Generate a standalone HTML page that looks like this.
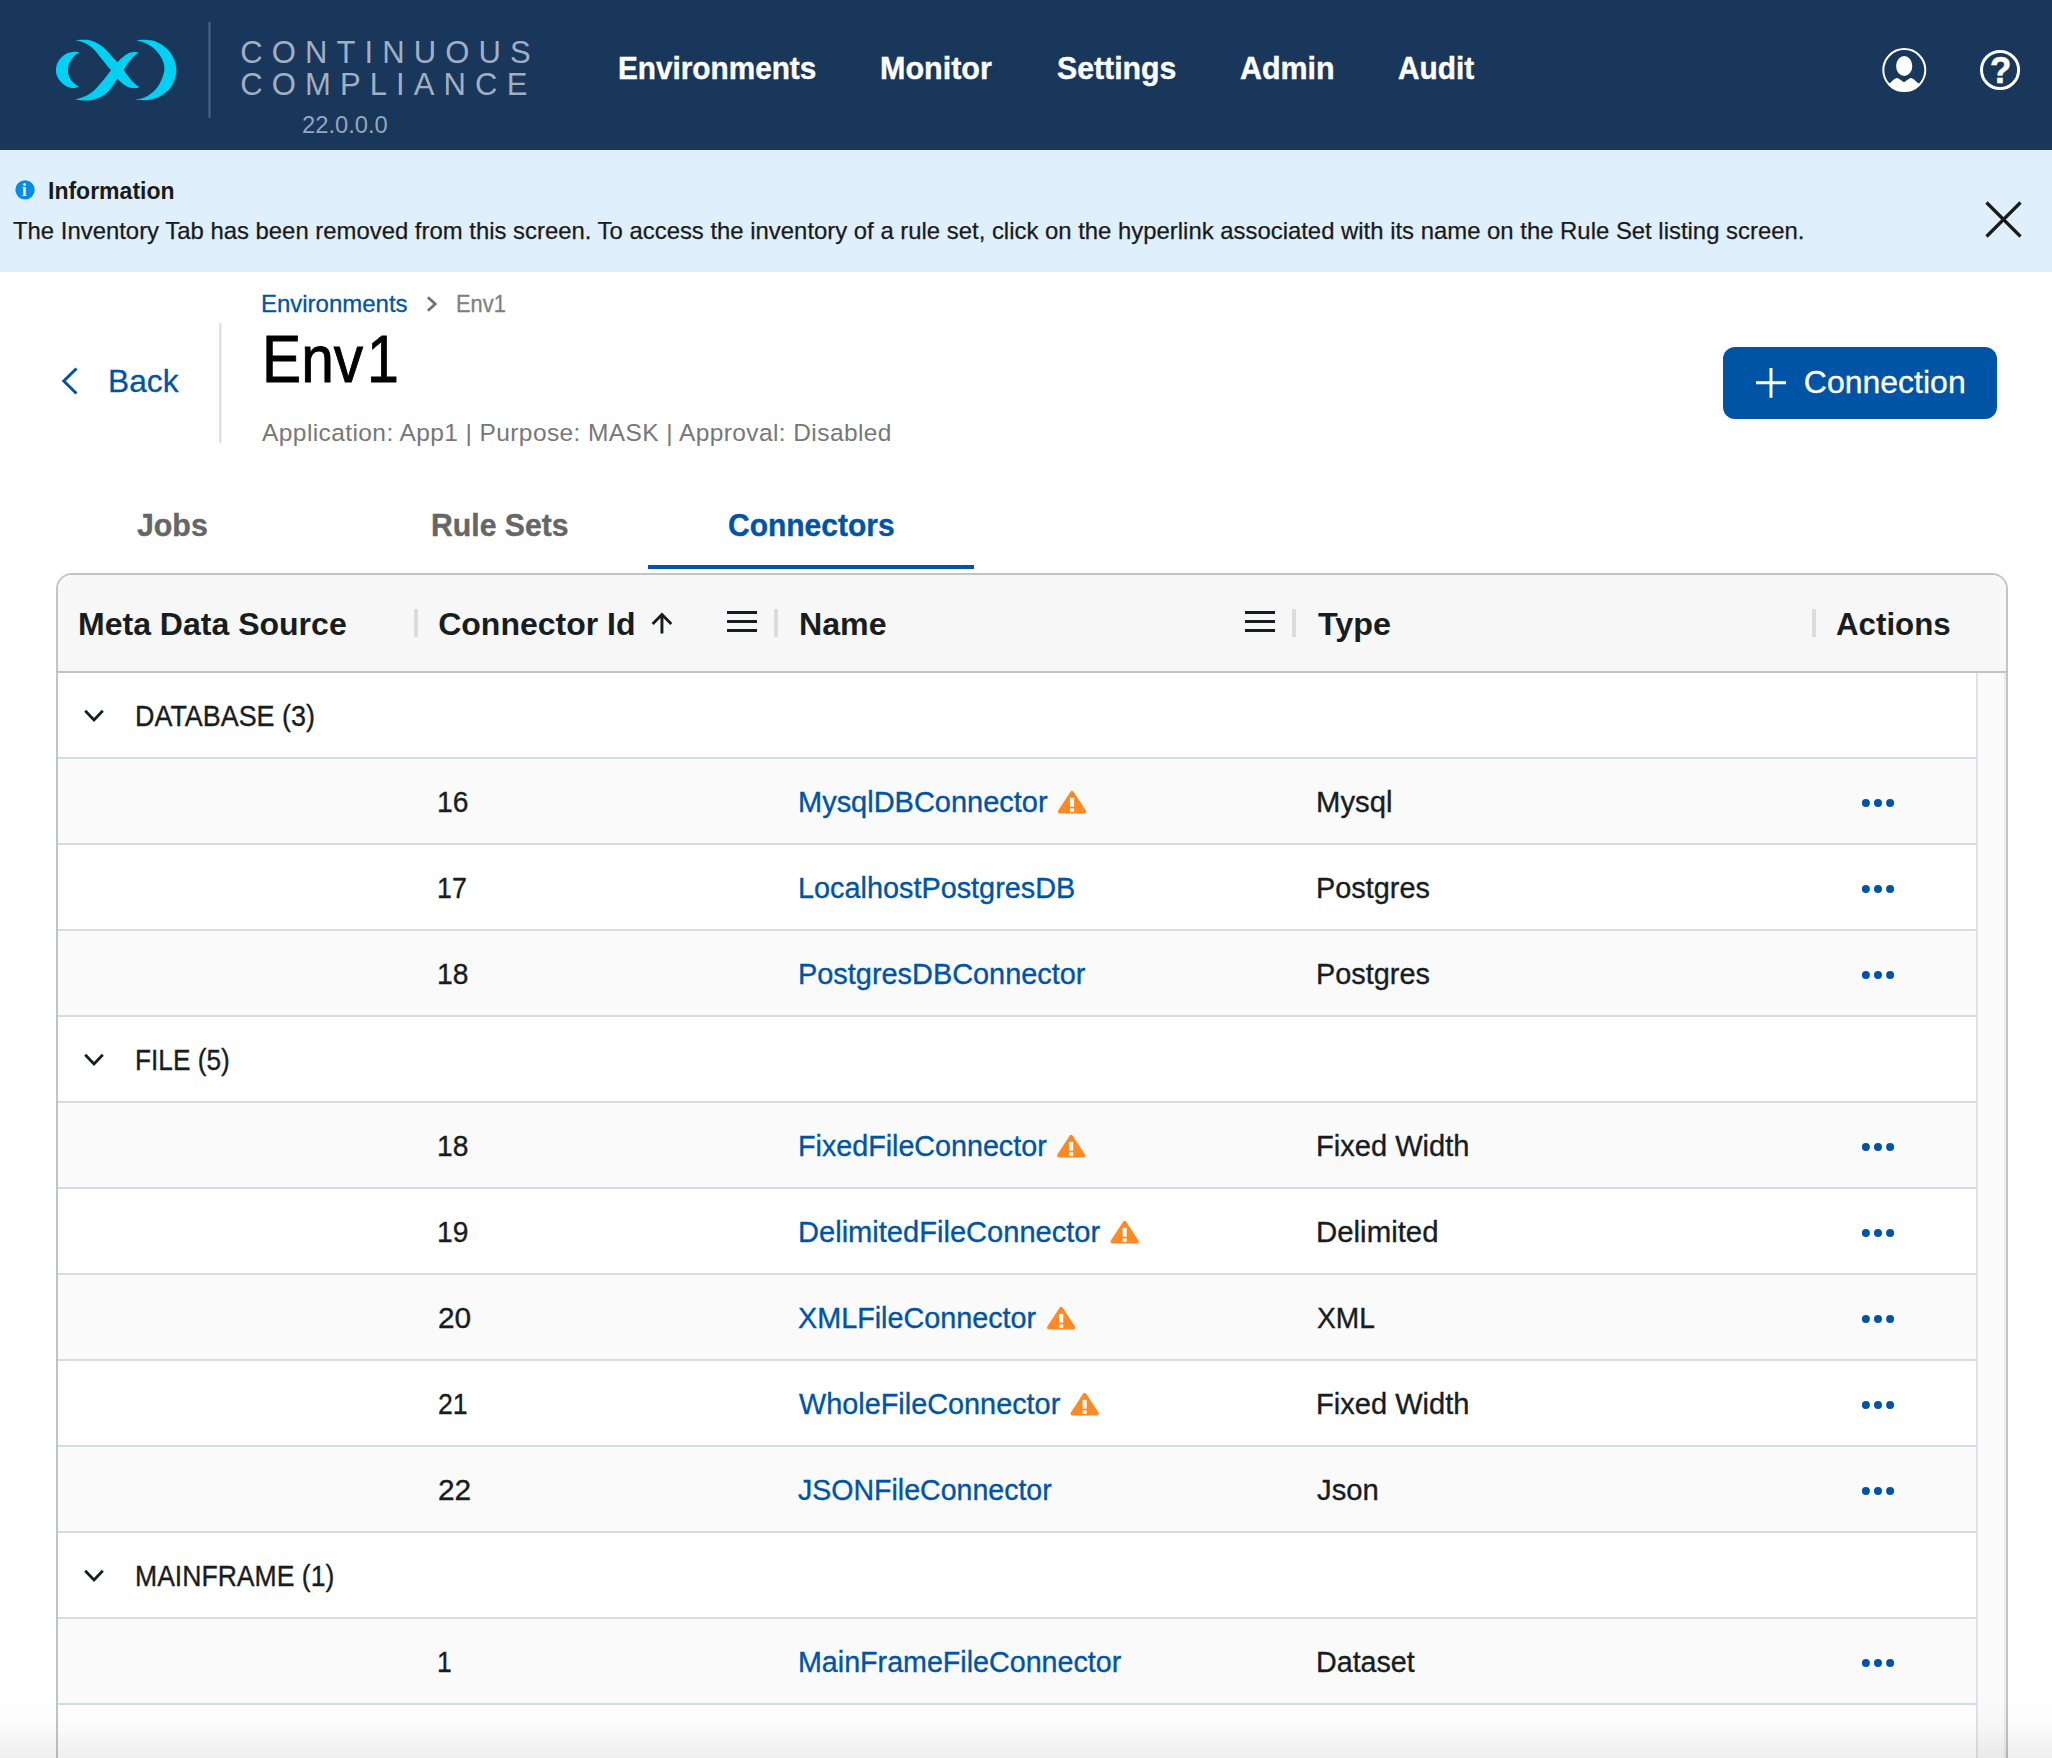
<!DOCTYPE html>
<html lang="en">
<head>
<meta charset="utf-8">
<title>Env1 - Connectors</title>
<style>
html,body{margin:0;padding:0;}
body{width:2052px;height:1758px;overflow:hidden;background:#fff;font-family:"Liberation Sans",sans-serif;position:relative;}
#root{position:absolute;left:0;top:0;width:2052px;height:1758px;overflow:hidden;}
.abs{position:absolute;}
.t{position:absolute;white-space:nowrap;transform-origin:0 50%;z-index:6;}
#hdr{left:0;top:0;width:2052px;height:150px;background:#18375b;}
#info{left:0;top:150px;width:2052px;height:122px;background:#dff0fc;}
#grid{left:56px;top:573px;width:1948px;height:1300px;border:2px solid #c2c4c3;border-radius:16px;background:#fff;overflow:hidden;}
#ghead{left:0;top:0;width:1948px;height:96px;background:#f7f7f7;border-bottom:2px solid #c2c4c3;}
.row{position:absolute;left:0;width:1918px;height:84px;border-bottom:2px solid #d6dce5;background:#fff;}
.row.odd{background:#fafafb;}
#sbar{left:1918px;top:98px;width:26px;height:1200px;background:#fafafa;border-left:2px solid #e2e2e2;border-right:2px solid #ececec;}
.sep{position:absolute;top:34px;width:4px;height:28px;background:#dcdcdc;}
#fade{left:0;top:1700px;width:2052px;height:58px;background:linear-gradient(to bottom,rgba(0,0,0,0),rgba(0,0,0,0.02) 50%,rgba(0,0,0,0.065));}
</style>
</head>
<body>
<div id="root">
<div class="abs" id="hdr"></div>
<div class="abs" id="info"></div>
<svg class="abs" style="left:0;top:0;z-index:5;pointer-events:none" width="2052" height="1758" viewBox="0 0 2052 1758">
<g fill="#00d0f2">
<path d="M75.0 40.5 C76.2 40.3 79.4 39.8 81.7 39.8 C84.0 39.7 86.5 39.6 88.8 40.0 C91.2 40.5 93.5 41.2 95.9 42.4 C98.2 43.5 100.8 45.3 102.9 47.0 C105.1 48.7 106.9 50.8 108.6 52.6 C110.2 54.4 111.4 56.0 112.8 57.6 C114.3 59.1 116.1 60.7 117.4 62.2 C118.7 63.6 119.5 64.7 120.6 66.0 C121.7 67.3 122.5 68.2 123.8 69.9 C125.1 71.7 126.9 74.7 128.4 76.6 C129.9 78.6 131.2 80.1 132.6 81.6 C134.0 83.1 135.7 84.6 136.9 85.5 C138.0 86.4 139.2 86.6 139.7 86.9 C139.0 87.1 137.1 88.0 135.4 88.1 C133.8 88.2 131.4 88.0 129.8 87.6 C128.1 87.2 127.0 86.6 125.6 85.8 C124.1 85.0 122.7 83.8 121.3 82.6 C120.0 81.5 118.6 80.1 117.4 78.8 C116.3 77.4 115.3 75.9 114.2 74.5 C113.2 73.1 112.5 72.0 111.1 70.3 C109.7 68.5 107.6 66.2 105.8 63.9 C103.9 61.7 102.0 59.1 100.1 56.9 C98.2 54.6 96.3 52.1 94.5 50.1 C92.6 48.2 90.9 46.6 88.8 45.2 C86.7 43.8 84.0 42.4 81.7 41.7 C79.4 40.9 76.2 40.7 75.0 40.5 Z"/>
<path d="M139.3 52.5 C138.3 52.4 135.2 51.9 133.3 52.0 C131.5 52.2 129.9 52.6 128.4 53.3 C126.9 54.0 125.6 55.1 124.1 56.1 C122.7 57.2 121.0 58.7 119.9 59.7 C118.8 60.7 118.4 61.1 117.4 62.2 C116.5 63.2 115.3 64.7 114.2 66.0 C113.2 67.4 112.2 68.7 111.1 70.3 C109.9 71.8 108.8 73.2 107.2 75.2 C105.6 77.2 103.4 80.1 101.5 82.3 C99.6 84.5 97.8 86.8 95.9 88.7 C94.0 90.5 92.3 92.2 90.2 93.6 C88.1 95.0 85.6 96.1 83.2 97.1 C80.7 98.1 76.7 99.2 75.4 99.6 C76.7 99.8 80.4 100.5 83.2 100.5 C85.9 100.6 89.0 100.4 91.6 100.0 C94.2 99.5 96.5 98.8 98.7 97.8 C100.9 96.9 103.2 95.7 105.1 94.3 C106.9 92.9 108.5 91.1 110.0 89.4 C111.5 87.6 113.0 85.5 114.2 83.7 C115.5 81.9 116.4 80.3 117.4 78.8 C118.5 77.2 119.5 75.6 120.6 74.2 C121.7 72.7 123.0 71.2 123.8 69.9 C124.6 68.7 124.7 68.1 125.6 66.7 C126.4 65.4 127.9 63.3 129.1 61.8 C130.3 60.3 131.4 58.8 132.6 57.6 C133.8 56.3 135.0 55.2 136.2 54.4 C137.3 53.5 138.8 52.8 139.3 52.5 Z"/>
<path d="M136.2 40.5 C137.5 40.3 141.2 39.7 143.9 39.8 C146.6 39.8 149.6 39.9 152.4 40.6 C155.2 41.3 158.2 42.5 160.9 44.1 C163.6 45.8 166.5 48.1 168.7 50.5 C170.8 52.8 172.4 55.6 173.6 58.3 C174.8 61.0 175.7 64.2 176.1 66.7 C176.5 69.3 176.5 71.2 176.1 73.8 C175.7 76.4 174.8 79.6 173.6 82.3 C172.4 85.0 170.8 87.8 168.7 90.1 C166.5 92.3 163.6 94.2 160.9 95.7 C158.2 97.2 155.2 98.5 152.4 99.2 C149.6 100.0 146.8 100.3 143.9 100.3 C141.0 100.4 136.6 99.7 135.1 99.6 C136.6 99.3 141.3 98.8 143.9 97.8 C146.6 96.8 148.8 95.4 151.0 93.6 C153.2 91.8 155.6 89.6 157.4 87.2 C159.1 84.9 160.5 82.1 161.6 79.5 C162.7 76.9 163.7 74.0 164.1 71.7 C164.5 69.3 164.5 67.6 164.1 65.3 C163.7 63.1 162.7 60.5 161.6 58.3 C160.5 56.0 159.1 53.9 157.4 51.9 C155.6 49.9 153.2 47.8 151.0 46.3 C148.8 44.7 146.4 43.3 143.9 42.4 C141.5 41.4 137.5 40.8 136.2 40.5 Z"/>
<path d="M79.6 52.5 C78.6 52.4 75.5 51.7 73.3 51.9 C71.0 52.1 68.3 52.6 66.2 53.7 C64.1 54.7 62.1 56.6 60.5 58.3 C59.0 60.0 57.8 62.0 57.0 63.9 C56.2 65.9 56.0 67.9 56.0 69.9 C56.0 71.9 56.2 74.0 57.0 75.9 C57.8 77.9 59.0 79.9 60.5 81.6 C62.1 83.3 64.1 85.1 66.2 86.2 C68.3 87.3 71.1 88.0 73.3 88.1 C75.4 88.1 78.3 86.8 79.3 86.5 C78.6 86.2 76.7 85.5 75.4 84.4 C74.0 83.4 72.3 81.7 71.1 80.2 C70.0 78.6 69.2 76.9 68.7 75.2 C68.1 73.5 68.0 71.7 68.0 69.9 C68.0 68.2 68.1 66.3 68.7 64.6 C69.2 62.9 70.0 61.3 71.1 59.7 C72.3 58.1 74.0 56.3 75.4 55.1 C76.8 53.9 78.9 52.9 79.6 52.5 Z"/>
</g>
<rect x="208.5" y="22" width="2" height="96" fill="#50657f"/>
<g>
<clipPath id="uc"><circle cx="1904.3" cy="70.1" r="21"/></clipPath>
<circle cx="1904.3" cy="70.1" r="21" fill="none" stroke="#fff" stroke-width="2"/>
<ellipse cx="1904.2" cy="66" rx="8.1" ry="10" fill="#fff"/>
<path clip-path="url(#uc)" d="M1882 88 L1890.3 82.8 C1893 80.5 1895 78 1896.8 78 C1899 78 1901.5 81 1904 82.3 C1906.5 81 1909 78 1911 78 C1913 78 1915 80.5 1917.9 83 L1927 88 L1927 95 L1882 95 Z" fill="#fff"/>
</g>
<circle cx="2000.05" cy="70.05" r="18.55" fill="none" stroke="#fff" stroke-width="3"/>
<circle cx="25.05" cy="189.85" r="9.7" fill="#048cec"/>
<path d="M1986.5 202.5 L2020.5 236.5 M2020.5 202.5 L1986.5 236.5" stroke="#1a1a1a" stroke-width="3.2" fill="none"/>
<path d="M427.9 297.3 L435.2 304 L427.9 310.7" stroke="#707070" stroke-width="2.8" fill="none"/>
<path d="M76.5 368.5 L63.8 381 L76.5 393.5" stroke="#0054a6" stroke-width="3" fill="none"/>
<rect x="219.3" y="323" width="2" height="120" fill="#dcdcdc"/>
<rect x="1723" y="347" width="274" height="72" rx="12" fill="#0054a6"/>
<path d="M1756 382.8 H1786 M1771 368 V397.8" stroke="#fff" stroke-width="3" fill="none" transform=""/>
<rect x="648" y="565" width="326" height="4" fill="#0054a6"/>
<path d="M661.95 633.6 V615 M652.6 624 L661.95 614.6 L671.3 624" stroke="#181d1f" stroke-width="2.9" fill="none"/>
<rect x="727" y="611" width="30" height="3" fill="#181d1f"/>
<rect x="727" y="620" width="30" height="3" fill="#181d1f"/>
<rect x="727" y="629" width="30" height="3" fill="#181d1f"/>
<rect x="1245" y="611" width="30" height="3" fill="#181d1f"/>
<rect x="1245" y="620" width="30" height="3" fill="#181d1f"/>
<rect x="1245" y="629" width="30" height="3" fill="#181d1f"/>
<path d="M85.2 710.8 L94 719.9 L102.8 710.8" stroke="#181d1f" stroke-width="2.8" fill="none"/>
<circle cx="1865.9" cy="803" r="4" fill="#0054a6"/>
<circle cx="1878" cy="803" r="4" fill="#0054a6"/>
<circle cx="1890.1" cy="803" r="4" fill="#0054a6"/>
<circle cx="1865.9" cy="889" r="4" fill="#0054a6"/>
<circle cx="1878" cy="889" r="4" fill="#0054a6"/>
<circle cx="1890.1" cy="889" r="4" fill="#0054a6"/>
<circle cx="1865.9" cy="975" r="4" fill="#0054a6"/>
<circle cx="1878" cy="975" r="4" fill="#0054a6"/>
<circle cx="1890.1" cy="975" r="4" fill="#0054a6"/>
<path d="M85.2 1054.8000000000002 L94 1063.9 L102.8 1054.8000000000002" stroke="#181d1f" stroke-width="2.8" fill="none"/>
<circle cx="1865.9" cy="1147" r="4" fill="#0054a6"/>
<circle cx="1878" cy="1147" r="4" fill="#0054a6"/>
<circle cx="1890.1" cy="1147" r="4" fill="#0054a6"/>
<circle cx="1865.9" cy="1233" r="4" fill="#0054a6"/>
<circle cx="1878" cy="1233" r="4" fill="#0054a6"/>
<circle cx="1890.1" cy="1233" r="4" fill="#0054a6"/>
<circle cx="1865.9" cy="1319" r="4" fill="#0054a6"/>
<circle cx="1878" cy="1319" r="4" fill="#0054a6"/>
<circle cx="1890.1" cy="1319" r="4" fill="#0054a6"/>
<circle cx="1865.9" cy="1405" r="4" fill="#0054a6"/>
<circle cx="1878" cy="1405" r="4" fill="#0054a6"/>
<circle cx="1890.1" cy="1405" r="4" fill="#0054a6"/>
<circle cx="1865.9" cy="1491" r="4" fill="#0054a6"/>
<circle cx="1878" cy="1491" r="4" fill="#0054a6"/>
<circle cx="1890.1" cy="1491" r="4" fill="#0054a6"/>
<path d="M85.2 1570.8000000000002 L94 1579.9 L102.8 1570.8000000000002" stroke="#181d1f" stroke-width="2.8" fill="none"/>
<circle cx="1865.9" cy="1663" r="4" fill="#0054a6"/>
<circle cx="1878" cy="1663" r="4" fill="#0054a6"/>
<circle cx="1890.1" cy="1663" r="4" fill="#0054a6"/>
<path d="M1072.07 792.76 L1084.30 811.57 L1059.83 811.57 Z" fill="#ff8a24" stroke="#ff8a24" stroke-width="3.8" stroke-linejoin="round"/>
<rect x="1070.00" y="797.90" width="4.1" height="8.75" fill="#fff"/>
<rect x="1070.00" y="808.40" width="4.1" height="3.5" fill="#fff"/>
<path d="M1071.17 1136.76 L1083.40 1155.57 L1058.93 1155.57 Z" fill="#ff8a24" stroke="#ff8a24" stroke-width="3.8" stroke-linejoin="round"/>
<rect x="1069.10" y="1141.90" width="4.1" height="8.75" fill="#fff"/>
<rect x="1069.10" y="1152.40" width="4.1" height="3.5" fill="#fff"/>
<path d="M1124.67 1222.76 L1136.90 1241.57 L1112.43 1241.57 Z" fill="#ff8a24" stroke="#ff8a24" stroke-width="3.8" stroke-linejoin="round"/>
<rect x="1122.60" y="1227.90" width="4.1" height="8.75" fill="#fff"/>
<rect x="1122.60" y="1238.40" width="4.1" height="3.5" fill="#fff"/>
<path d="M1061.17 1308.76 L1073.40 1327.57 L1048.93 1327.57 Z" fill="#ff8a24" stroke="#ff8a24" stroke-width="3.8" stroke-linejoin="round"/>
<rect x="1059.10" y="1313.90" width="4.1" height="8.75" fill="#fff"/>
<rect x="1059.10" y="1324.40" width="4.1" height="3.5" fill="#fff"/>
<path d="M1084.67 1394.76 L1096.90 1413.57 L1072.43 1413.57 Z" fill="#ff8a24" stroke="#ff8a24" stroke-width="3.8" stroke-linejoin="round"/>
<rect x="1082.60" y="1399.90" width="4.1" height="8.75" fill="#fff"/>
<rect x="1082.60" y="1410.40" width="4.1" height="3.5" fill="#fff"/>
</svg>
<div class="abs" id="grid">
  <div class="abs" id="ghead">
    <div class="sep" style="left:356px"></div>
    <div class="sep" style="left:716px"></div>
    <div class="sep" style="left:1234px"></div>
    <div class="sep" style="left:1754px"></div>
  </div>
  <div class="row" style="top:98px"></div>
  <div class="row odd" style="top:184px"></div>
  <div class="row" style="top:270px"></div>
  <div class="row odd" style="top:356px"></div>
  <div class="row" style="top:442px"></div>
  <div class="row odd" style="top:528px"></div>
  <div class="row" style="top:614px"></div>
  <div class="row odd" style="top:700px"></div>
  <div class="row" style="top:786px"></div>
  <div class="row odd" style="top:872px"></div>
  <div class="row" style="top:958px"></div>
  <div class="row odd" style="top:1044px"></div>
  <div class="row" style="top:1130px"></div>
  <div class="row odd" style="top:1216px"></div>
  <div class="abs" id="sbar"></div>
</div>
<span class="t" style="left:240.25px;top:32.9px;font-size:31px;line-height:40px;color:#a2aec2;letter-spacing:9.119px;">CONTINUOUS</span>
<span class="t" style="left:240.25px;top:64.8px;font-size:31px;line-height:40px;color:#a2aec2;letter-spacing:9.119px;">COMPLIANCE</span>
<span class="t" style="left:301.99px;top:108.8px;font-size:24px;line-height:31px;color:#97a5b8;transform:scaleX(0.9892);">22.0.0.0</span>
<span class="t" style="left:617.94px;top:47.2px;font-size:32px;line-height:42px;font-weight:700;color:#fff;transform:scaleX(0.9292);-webkit-text-stroke:0.4px;">Environments</span>
<span class="t" style="left:879.99px;top:47.2px;font-size:32px;line-height:42px;font-weight:700;color:#fff;transform:scaleX(0.9535);-webkit-text-stroke:0.4px;">Monitor</span>
<span class="t" style="left:1057.13px;top:47.2px;font-size:32px;line-height:42px;font-weight:700;color:#fff;transform:scaleX(0.9459);-webkit-text-stroke:0.4px;">Settings</span>
<span class="t" style="left:1240.02px;top:47.2px;font-size:32px;line-height:42px;font-weight:700;color:#fff;transform:scaleX(0.9508);-webkit-text-stroke:0.4px;">Admin</span>
<span class="t" style="left:1398.13px;top:47.2px;font-size:32px;line-height:42px;font-weight:700;color:#fff;transform:scaleX(0.9323);-webkit-text-stroke:0.4px;">Audit</span>
<span class="t" style="left:1989.71px;top:46.7px;font-size:37px;line-height:48px;font-weight:700;color:#fff;transform:scaleX(0.9412);-webkit-text-stroke:0.6px;">?</span>
<span class="t" style="left:47.86px;top:174.7px;font-size:24px;line-height:31px;font-weight:700;color:#1a1a1a;transform:scaleX(0.9588);">Information</span>
<span class="t" style="left:22.24px;top:177.0px;font-size:19px;line-height:25px;font-weight:700;color:#fff;transform:scaleX(0.8632);font-family:'Liberation Serif',serif;">i</span>
<span class="t" style="left:13.03px;top:214.6px;font-size:24px;line-height:31px;color:#1a1a1a;transform:scaleX(0.9952);-webkit-text-stroke:0.25px;">The Inventory Tab has been removed from this screen. To access the inventory of a rule set, click on the hyperlink associated with its name on the Rule Set listing screen.</span>
<span class="t" style="left:261.23px;top:287.8px;font-size:24px;line-height:31px;color:#0054a6;transform:scaleX(0.9986);-webkit-text-stroke:0.3px;">Environments</span>
<span class="t" style="left:456.09px;top:287.8px;font-size:24px;line-height:31px;color:#808080;transform:scaleX(0.9102);-webkit-text-stroke:0.3px;">Env1</span>
<span class="t" style="left:108.42px;top:360.3px;font-size:32px;line-height:42px;color:#0054a6;transform:scaleX(0.9907);-webkit-text-stroke:0.3px;">Back</span>
<span class="t" style="left:261.71px;top:316.2px;font-size:66.5px;line-height:86px;color:#000;transform:scaleX(0.8830);-webkit-text-stroke:0.9px;">Env</span>
<span class="t" style="left:367.23px;top:316.2px;font-size:66.5px;line-height:86px;color:#000;transform:scaleX(0.8600);-webkit-text-stroke:0.9px;">1</span>
<span class="t" style="left:262.10px;top:417.0px;font-size:24.5px;line-height:32px;color:#777;letter-spacing:0.405px;">Application: App1 | Purpose: MASK | Approval: Disabled</span>
<span class="t" style="left:1803.80px;top:360.8px;font-size:32px;line-height:42px;color:#fff;-webkit-text-stroke:0.3px;">Connection</span>
<span class="t" style="left:136.50px;top:503.6px;font-size:32px;line-height:42px;font-weight:700;color:#666;transform:scaleX(0.9470);-webkit-text-stroke:0.4px;">Jobs</span>
<span class="t" style="left:431.11px;top:503.6px;font-size:32px;line-height:42px;font-weight:700;color:#666;transform:scaleX(0.9437);-webkit-text-stroke:0.4px;">Rule Sets</span>
<span class="t" style="left:728.06px;top:503.6px;font-size:32px;line-height:42px;font-weight:700;color:#0054a6;transform:scaleX(0.9373);-webkit-text-stroke:0.4px;">Connectors</span>
<span class="t" style="left:78.10px;top:603.0px;font-size:32px;line-height:42px;font-weight:700;color:#181d1f;transform:scaleX(1.0006);">Meta Data Source</span>
<span class="t" style="left:438.20px;top:603.0px;font-size:32px;line-height:42px;font-weight:700;color:#181d1f;">Connector Id</span>
<span class="t" style="left:798.69px;top:603.0px;font-size:32px;line-height:42px;font-weight:700;color:#181d1f;transform:scaleX(1.0052);">Name</span>
<span class="t" style="left:1317.80px;top:603.0px;font-size:32px;line-height:42px;font-weight:700;color:#181d1f;transform:scaleX(1.0110);">Type</span>
<span class="t" style="left:1836.31px;top:603.0px;font-size:32px;line-height:42px;font-weight:700;color:#181d1f;transform:scaleX(0.9771);">Actions</span>
<span class="t" style="left:134.70px;top:697.4px;font-size:29px;line-height:38px;color:#181d1f;transform:scaleX(0.9277);-webkit-text-stroke:0.35px;">DATABASE (3)</span>
<span class="t" style="left:437.24px;top:782.9px;font-size:29px;line-height:38px;color:#181d1f;transform:scaleX(0.9737);-webkit-text-stroke:0.35px;">16</span>
<span class="t" style="left:797.94px;top:782.9px;font-size:29px;line-height:38px;color:#0054a6;transform:scaleX(0.9992);-webkit-text-stroke:0.35px;">MysqlDBConnector</span>
<span class="t" style="left:1316.11px;top:782.9px;font-size:29px;line-height:38px;color:#181d1f;transform:scaleX(1.0091);-webkit-text-stroke:0.35px;">Mysql</span>
<span class="t" style="left:437.33px;top:868.9px;font-size:29px;line-height:38px;color:#181d1f;transform:scaleX(0.9225);-webkit-text-stroke:0.35px;">17</span>
<span class="t" style="left:797.95px;top:868.9px;font-size:29px;line-height:38px;color:#0054a6;transform:scaleX(0.9942);-webkit-text-stroke:0.35px;">LocalhostPostgresDB</span>
<span class="t" style="left:1316.15px;top:868.9px;font-size:29px;line-height:38px;color:#181d1f;transform:scaleX(0.9949);-webkit-text-stroke:0.35px;">Postgres</span>
<span class="t" style="left:437.24px;top:954.9px;font-size:29px;line-height:38px;color:#181d1f;transform:scaleX(0.9737);-webkit-text-stroke:0.35px;">18</span>
<span class="t" style="left:797.94px;top:954.9px;font-size:29px;line-height:38px;color:#0054a6;transform:scaleX(0.9964);-webkit-text-stroke:0.35px;">PostgresDBConnector</span>
<span class="t" style="left:1316.15px;top:954.9px;font-size:29px;line-height:38px;color:#181d1f;transform:scaleX(0.9949);-webkit-text-stroke:0.35px;">Postgres</span>
<span class="t" style="left:134.75px;top:1041.4px;font-size:29px;line-height:38px;color:#181d1f;transform:scaleX(0.9042);-webkit-text-stroke:0.35px;">FILE (5)</span>
<span class="t" style="left:437.24px;top:1126.9px;font-size:29px;line-height:38px;color:#181d1f;transform:scaleX(0.9737);-webkit-text-stroke:0.35px;">18</span>
<span class="t" style="left:797.96px;top:1126.9px;font-size:29px;line-height:38px;color:#0054a6;transform:scaleX(0.9890);-webkit-text-stroke:0.35px;">FixedFileConnector</span>
<span class="t" style="left:1316.13px;top:1126.9px;font-size:29px;line-height:38px;color:#181d1f;transform:scaleX(1.0026);-webkit-text-stroke:0.35px;">Fixed Width</span>
<span class="t" style="left:437.24px;top:1212.9px;font-size:29px;line-height:38px;color:#181d1f;transform:scaleX(0.9737);-webkit-text-stroke:0.35px;">19</span>
<span class="t" style="left:797.93px;top:1212.9px;font-size:29px;line-height:38px;color:#0054a6;transform:scaleX(1.0027);-webkit-text-stroke:0.35px;">DelimitedFileConnector</span>
<span class="t" style="left:1316.10px;top:1212.9px;font-size:29px;line-height:38px;color:#181d1f;transform:scaleX(1.0139);-webkit-text-stroke:0.35px;">Delimited</span>
<span class="t" style="left:437.60px;top:1298.9px;font-size:29px;line-height:38px;color:#181d1f;transform:scaleX(1.0273);-webkit-text-stroke:0.35px;">20</span>
<span class="t" style="left:798.45px;top:1298.9px;font-size:29px;line-height:38px;color:#0054a6;transform:scaleX(0.9918);-webkit-text-stroke:0.35px;">XMLFileConnector</span>
<span class="t" style="left:1316.86px;top:1298.9px;font-size:29px;line-height:38px;color:#181d1f;transform:scaleX(0.9700);-webkit-text-stroke:0.35px;">XML</span>
<span class="t" style="left:437.75px;top:1384.9px;font-size:29px;line-height:38px;color:#181d1f;transform:scaleX(0.9185);-webkit-text-stroke:0.35px;">21</span>
<span class="t" style="left:798.90px;top:1384.9px;font-size:29px;line-height:38px;color:#0054a6;transform:scaleX(0.9943);-webkit-text-stroke:0.35px;">WholeFileConnector</span>
<span class="t" style="left:1316.13px;top:1384.9px;font-size:29px;line-height:38px;color:#181d1f;transform:scaleX(1.0026);-webkit-text-stroke:0.35px;">Fixed Width</span>
<span class="t" style="left:437.60px;top:1470.9px;font-size:29px;line-height:38px;color:#181d1f;transform:scaleX(1.0295);-webkit-text-stroke:0.35px;">22</span>
<span class="t" style="left:798.45px;top:1470.9px;font-size:29px;line-height:38px;color:#0054a6;transform:scaleX(0.9838);-webkit-text-stroke:0.35px;">JSONFileConnector</span>
<span class="t" style="left:1316.84px;top:1470.9px;font-size:29px;line-height:38px;color:#181d1f;transform:scaleX(1.0089);-webkit-text-stroke:0.35px;">Json</span>
<span class="t" style="left:134.72px;top:1557.4px;font-size:29px;line-height:38px;color:#181d1f;transform:scaleX(0.9161);-webkit-text-stroke:0.35px;">MAINFRAME (1)</span>
<span class="t" style="left:437.34px;top:1642.9px;font-size:29px;line-height:38px;color:#181d1f;transform:scaleX(0.9132);-webkit-text-stroke:0.35px;">1</span>
<span class="t" style="left:797.96px;top:1642.9px;font-size:29px;line-height:38px;color:#0054a6;transform:scaleX(0.9878);-webkit-text-stroke:0.35px;">MainFrameFileConnector</span>
<span class="t" style="left:1316.16px;top:1642.9px;font-size:29px;line-height:38px;color:#181d1f;transform:scaleX(0.9880);-webkit-text-stroke:0.35px;">Dataset</span>
<div class="abs" id="fade"></div>
</div>
<script>(function(){var w=window.innerWidth||2052;if(Math.abs(w-2052)>2){var r=document.getElementById("root");r.style.transformOrigin="0 0";r.style.transform="scale("+(w/2052)+")";}})();</script>
</body>
</html>
